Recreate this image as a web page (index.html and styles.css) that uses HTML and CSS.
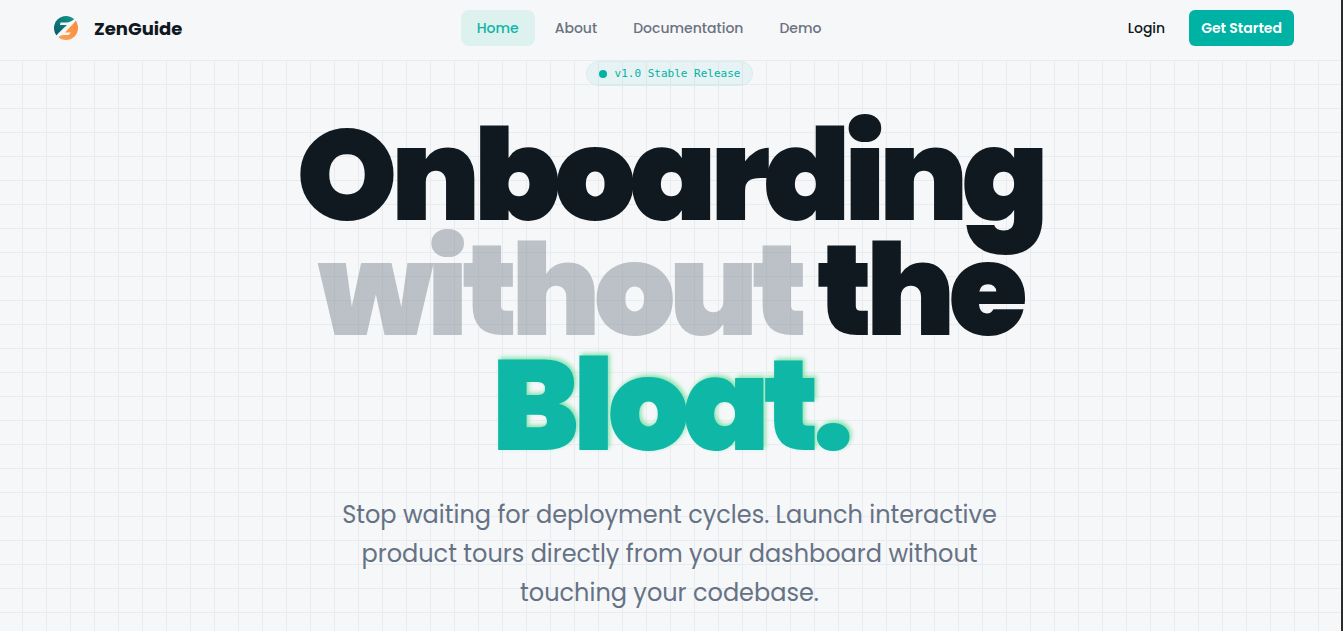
FILE: index.html
```html
<!DOCTYPE html>
<html lang="en">
<head>
  <meta charset="UTF-8">
  <meta name="viewport" content="width=device-width, initial-scale=1.0">
  <title>ZenGuide</title>
  <link rel="stylesheet" href="styles.css">
</head>
<body>
  <header class="header">
    <a href="#" class="brand">
      <svg class="logo" viewBox="0 0 36 36" aria-hidden="true">
        <defs>
          <linearGradient id="teal" x1="0" y1="1" x2="1" y2="0">
            <stop offset="0" stop-color="#0b4f60"/>
            <stop offset="1" stop-color="#12a595"/>
          </linearGradient>
          <linearGradient id="orange" x1="0" y1="1" x2="1" y2="0">
            <stop offset="0" stop-color="#ffa552"/>
            <stop offset="1" stop-color="#f5873c"/>
          </linearGradient>
          <clipPath id="disc"><circle cx="18" cy="18" r="12"/></clipPath>
        </defs>
        <g clip-path="url(#disc)">
          <path fill="url(#teal)" d="M4 4H31L27 10L10 29H4Z"/>
          <path fill="url(#orange)" d="M32 4V32H8L17 20L27 10Z"/>
        </g>
        <path fill="#f5f7f9" d="M12.500 12.500H19.500C23 12 26 9.500 29 7C28 11 25.500 14 23 16L17 22.500H23L20.500 25H15.500C12.500 25 11 27 9.500 29.500L7 27C9.500 24 13 20.500 19 15H12Z"/>
      </svg>
      <span>ZenGuide</span>
    </a>
    <nav class="nav">
      <a href="#" class="active">Home</a>
      <a href="#">About</a>
      <a href="#">Documentation</a>
      <a href="#">Demo</a>
    </nav>
    <div class="actions">
      <a href="#" class="login">Login</a>
      <button type="button" class="start">Get Started</button>
    </div>
  </header>
  <main class="hero">
    <div class="badge"><span class="dot"></span>v1.0 Stable Release</div>
    <h1>Onboarding <br><span class="muted">without</span> the <br><span class="accent">Bloat.</span></h1>
    <p class="lead">Stop waiting for deployment cycles. Launch interactive product tours directly from your dashboard without touching your codebase.</p>
  </main>
</body>
</html>
```
FILE: styles.css
```css
* {
  margin: 0;
  padding: 0;
  box-sizing: border-box;
}

body {
  min-height: 100vh;
  overflow: hidden;
  font-family: Poppins, Inter, sans-serif;
  color: #101820;
  background-color: #f5f7f9;
  border-right: 2px solid #2b2b2b;
}

a {
  color: inherit;
  text-decoration: none;
}

.header {
  display: flex;
  justify-content: space-between;
  align-items: center;
  height: 61px;
  padding: 0 47px 4px 48px;
  border-bottom: 1px solid #e9ecee;
}

.brand {
  display: flex;
  align-items: center;
  gap: 10px;
  font-size: 18px;
  font-weight: 700;
}

.logo {
  width: 36px;
  height: 36px;
}

.nav {
  display: flex;
  gap: 4px;
  font-size: 14px;
  font-weight: 500;
  color: #6b7280;
}

.nav a {
  padding: 0 16px;
  line-height: 36px;
  border-radius: 8px;
}

.nav .active {
  color: #0fb5a6;
  background-color: #ddf1ef;
}

.actions {
  display: flex;
  align-items: center;
  gap: 12px;
  font-size: 14px;
  font-weight: 500;
}

.login {
  padding: 0 12px;
}

.start {
  height: 36px;
  padding: 0 12px;
  font: inherit;
  font-weight: 600;
  color: #fff;
  background-color: #00b2a3;
  border: none;
  border-radius: 6px;
}

.hero {
  display: flex;
  flex-direction: column;
  align-items: center;
  min-height: calc(100vh - 61px);
  padding-right: 2px;
  text-align: center;
  background-image:
    linear-gradient(to right, #e9ecee 1px, transparent 1px),
    linear-gradient(to bottom, #e9ecee 1px, transparent 1px);
  background-size: 24px 24px;
  background-position: 22px 23px;
}

.badge {
  display: flex;
  align-items: center;
  gap: 8px;
  height: 25px;
  padding: 0 12px;
  font-family: "DejaVu Sans Mono", monospace;
  font-size: 11px;
  color: #00b2a3;
  background-color: rgba(0, 178, 163, 0.06);
  border: 1px solid #d5efec;
  border-radius: 13px;
}

.dot {
  width: 8px;
  height: 8px;
  border-radius: 50%;
  background-color: #00b2a3;
}

h1 {
  margin: 32px 0;
  font-size: 128px;
  font-weight: 900;
  line-height: 115px;
  letter-spacing: -0.05em;
}

.muted {
  color: rgba(107, 118, 132, 0.42);
}

.accent {
  color: #0fb7a7;
  text-shadow: 2px -2px 4px #86e3ab;
}

.lead {
  max-width: 672px;
  font-size: 24px;
  line-height: 39px;
  color: #667284;
}
```
